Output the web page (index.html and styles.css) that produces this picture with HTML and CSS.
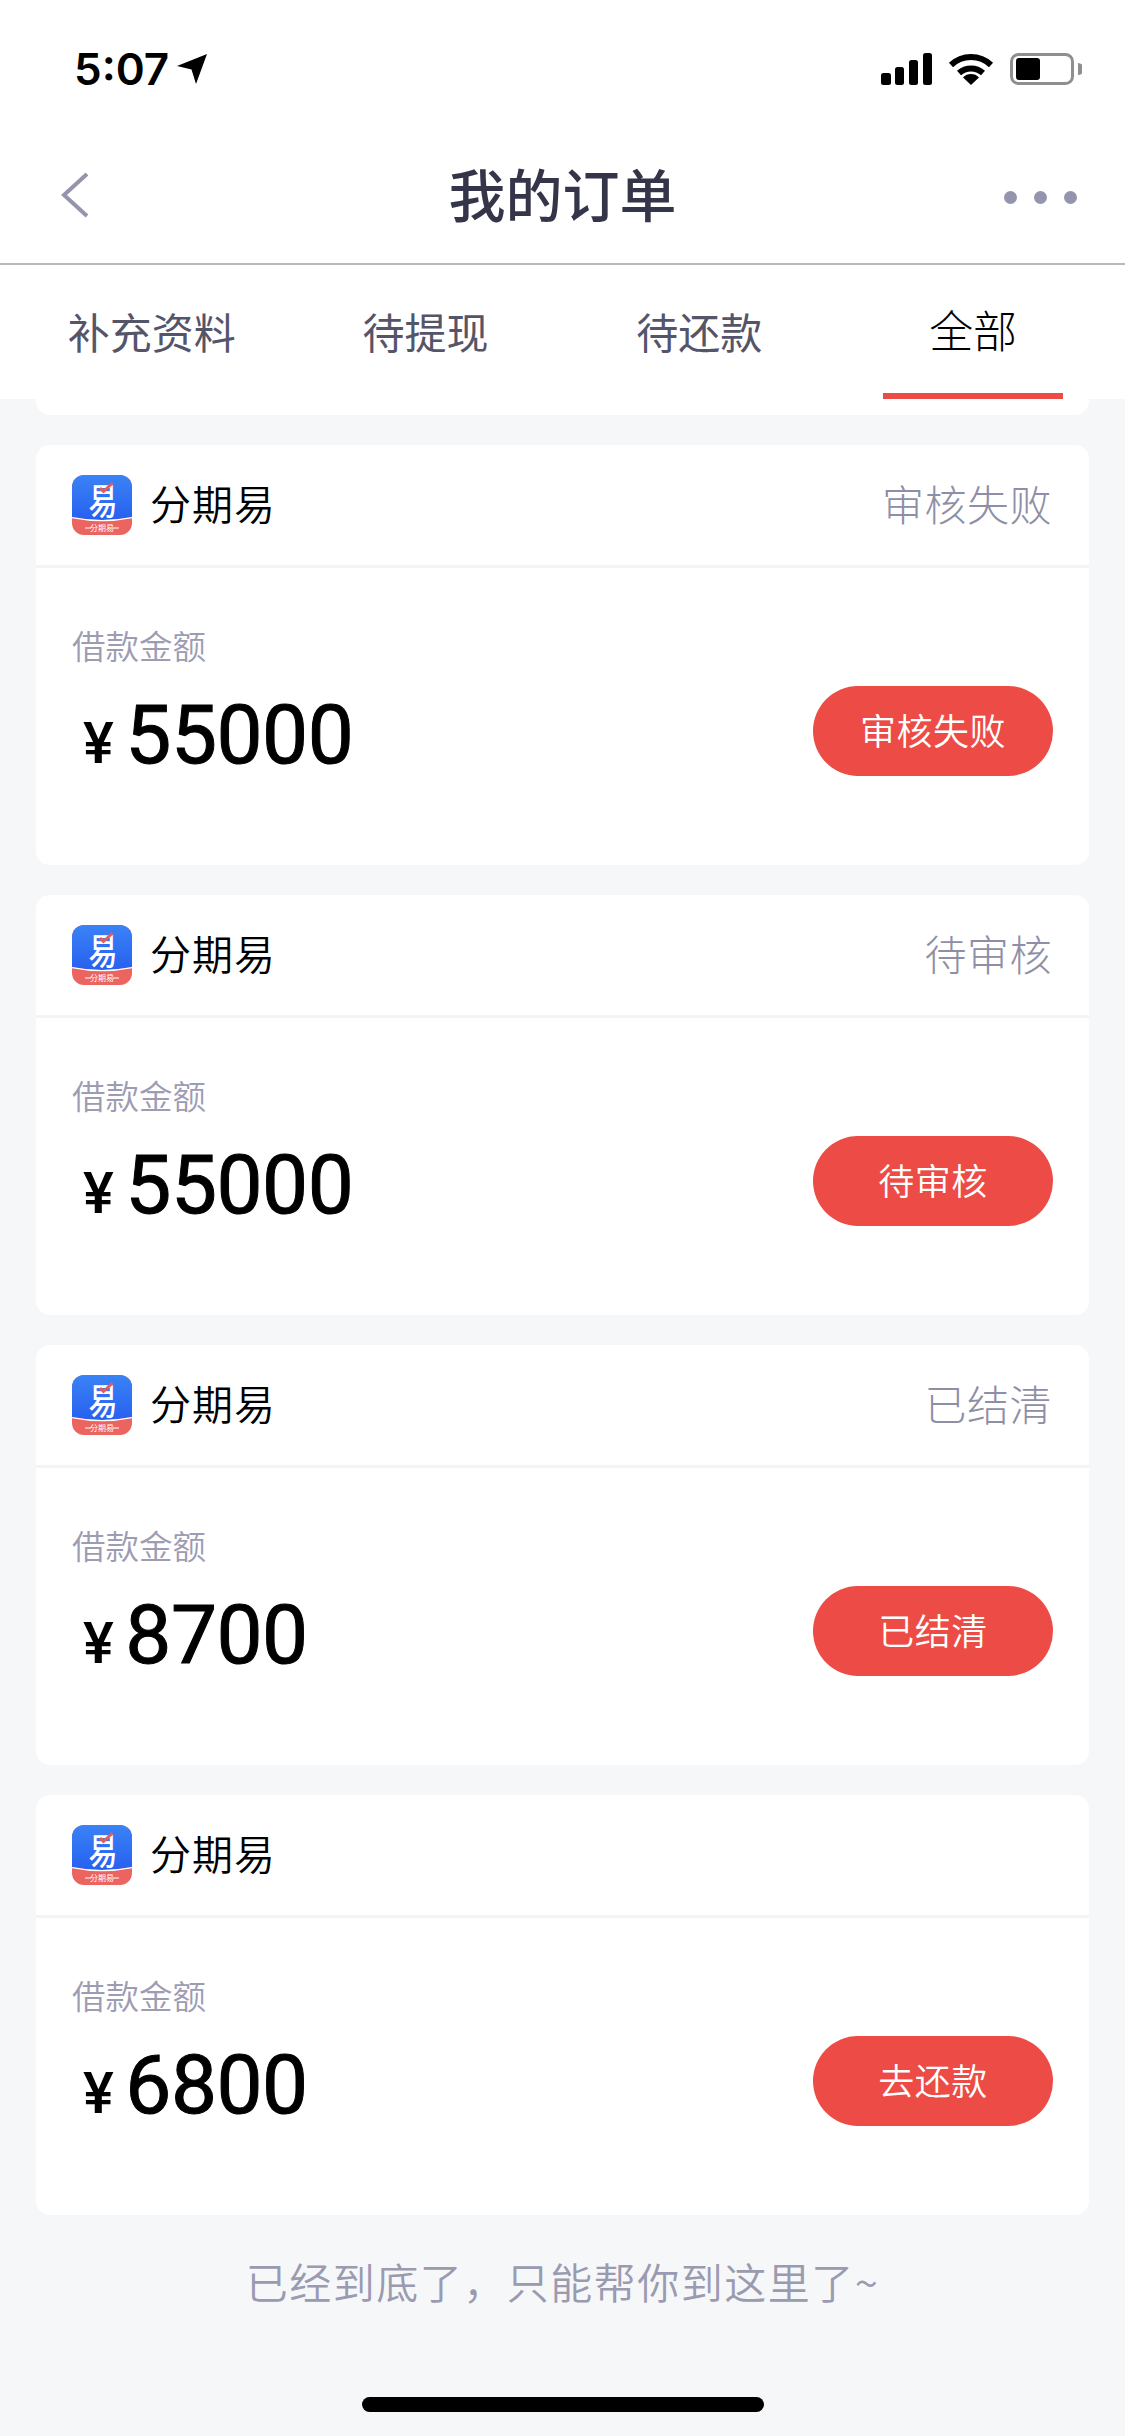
FILE: index.html
```html
<!DOCTYPE html>
<html lang="zh-CN">
    <head>
        <meta charset="UTF-8">
        <meta name="viewport" content="width=device-width, initial-scale=1.0">
        <title>我的订单</title>
        <link rel="stylesheet" href="styles.css">
    </head>
    <body>
        <svg class="defs" width="0" height="0">
            <defs>
                <linearGradient id="logoBlue" x1="0" y1="0" x2="0" y2="1">
                    <stop offset="0" stop-color="#3a83f6"/>
                    <stop offset="1" stop-color="#2760f0"/>
                </linearGradient>
                <symbol id="logo" viewBox="0 0 60 60">
                    <rect width="60" height="60" rx="12" fill="#ec6460"/>
                    <path d="M0 12a12 12 0 0 1 12-12h36a12 12 0 0 1 12 12v30q-30 6-60 0z" fill="url(#logoBlue)"/>
                    <path d="M0 42q30 6 60 0v1.200q-30 6-60 0z" fill="#fff"/>
                    <text class="logo-big" transform="translate(31 40) scale(1 1.25)">易</text>
                    <path d="M28 13l3.500 3.500 9-8.500" fill="none" stroke="#ec5a50" stroke-width="3"/>
                    <text x="30" y="56" class="logo-small">分期易</text>
                    <path d="M13 53h6M41 53h6" stroke="#fff" stroke-width="1"/>
                </symbol>
            </defs>
        </svg>

        <div class="status-bar">
            <div class="status-left">
                <span class="time">5:07</span>
                <svg class="arrow" width="30" height="30" viewBox="0 0 30 30"><path d="M30 0L19 30 14.500 15.500 0 12z" fill="#000"/></svg>
            </div>
            <div class="status-right">
                <svg width="51" height="32" viewBox="0 0 51 32">
                    <rect x="0" y="20" width="10" height="12" rx="2.500"/>
                    <rect x="14" y="14" width="9" height="18" rx="2.500"/>
                    <rect x="28" y="7" width="9" height="25" rx="2.500"/>
                    <rect x="42" y="0" width="9" height="32" rx="2.500"/>
                </svg>
                <svg width="46" height="32" viewBox="0 0 46 32">
                    <path d="M3 12A29 29 0 0 1 43 12M11 20A18 18 0 0 1 35 20" fill="none" stroke="#000" stroke-width="6"/>
                    <path d="M23 32L15 24.500A11 11 0 0 1 31 24.500z"/>
                </svg>
                <svg width="72" height="32" viewBox="0 0 72 32">
                    <rect x="1.500" y="1.500" width="61" height="29" rx="7" fill="none" stroke="#8f8f8f" stroke-width="3"/>
                    <rect x="6" y="5" width="24" height="22" rx="3"/>
                    <path d="M68 10a6 6 0 0 1 0 12z" fill="#8f8f8f"/>
                </svg>
            </div>
        </div>

        <nav class="nav-bar">
            <svg class="back" width="30" height="46" viewBox="0 0 30 46"><path d="M27 2L4 23l23 21" fill="none" stroke="#9494ac" stroke-width="4"/></svg>
            <h1 class="title">我的订单</h1>
            <div class="more"><i></i><i></i><i></i></div>
        </nav>

        <div class="tabs">
            <div class="tab">补充资料</div>
            <div class="tab">待提现</div>
            <div class="tab">待还款</div>
            <div class="tab active">全部</div>
        </div>

        <main class="list">
            <div class="card-stub"></div>

            <section class="card">
                <div class="card-head">
                    <svg class="logo"><use href="#logo"/></svg>
                    <span class="app-name">分期易</span>
                    <span class="state">审核失败</span>
                </div>
                <div class="card-body">
                    <div class="loan">
                        <div class="loan-label">借款金额</div>
                        <div class="amount"><span class="yen">¥</span>55000</div>
                    </div>
                    <a class="pill" href="#">审核失败</a>
                </div>
            </section>

            <section class="card">
                <div class="card-head">
                    <svg class="logo"><use href="#logo"/></svg>
                    <span class="app-name">分期易</span>
                    <span class="state">待审核</span>
                </div>
                <div class="card-body">
                    <div class="loan">
                        <div class="loan-label">借款金额</div>
                        <div class="amount"><span class="yen">¥</span>55000</div>
                    </div>
                    <a class="pill" href="#">待审核</a>
                </div>
            </section>

            <section class="card">
                <div class="card-head">
                    <svg class="logo"><use href="#logo"/></svg>
                    <span class="app-name">分期易</span>
                    <span class="state">已结清</span>
                </div>
                <div class="card-body">
                    <div class="loan">
                        <div class="loan-label">借款金额</div>
                        <div class="amount"><span class="yen">¥</span>8700</div>
                    </div>
                    <a class="pill" href="#">已结清</a>
                </div>
            </section>

            <section class="card">
                <div class="card-head">
                    <svg class="logo"><use href="#logo"/></svg>
                    <span class="app-name">分期易</span>
                </div>
                <div class="card-body">
                    <div class="loan">
                        <div class="loan-label">借款金额</div>
                        <div class="amount"><span class="yen">¥</span>6800</div>
                    </div>
                    <a class="pill" href="#">去还款</a>
                </div>
            </section>
        </main>

        <p class="end-note">已经到底了，只能帮你到这里了~</p>
        <div class="home-bar"></div>
    </body>
</html>
```

FILE: styles.css
```css
body {
    margin: 0;
    height: 2436px;
    overflow: hidden;
    background-color: #f6f7f9;
    font-family: "Noto Sans CJK SC", "Noto Sans", sans-serif;
}

.defs {
    display: block;
    height: 0;
}

.logo-big {
    font-size: 29px;
    font-weight: 500;
    fill: #fff;
    text-anchor: middle;
}

.logo-small {
    font-size: 8px;
    fill: #fff;
    text-anchor: middle;
}

/* status bar */
.status-bar {
    height: 132px;
    box-sizing: border-box;
    padding: 53px 43px 0 74px;
    display: flex;
    justify-content: space-between;
    align-items: flex-start;
    background-color: #fff;
}

.status-left {
    display: flex;
    align-items: center;
    gap: 8px;
    height: 32px;
}

.time {
    font-family: Inter, sans-serif;
    font-size: 44px;
    font-weight: 600;
    line-height: 32px;
    color: #000;
}

.status-right {
    display: flex;
    gap: 16px;
}

/* nav */
.nav-bar {
    height: 133px;
    box-sizing: border-box;
    border-bottom: 2px solid #b9b9b9;
    padding: 0 48px 6px;
    display: grid;
    grid-template-columns: 1fr auto 1fr;
    align-items: center;
    background-color: #fff;
}

.back {
    margin-left: 12px;
}

.title {
    margin: 0 0 6px;
    font-size: 57px;
    font-weight: 500;
    line-height: 80px;
    color: #35354a;
}

.more {
    display: flex;
    justify-content: flex-end;
    gap: 17px;
    margin-top: 6px;
}

.more i {
    width: 13px;
    height: 13px;
    border-radius: 50%;
    background-color: #9494ac;
}

/* tabs */
.tabs {
    height: 134px;
    padding: 0 15px;
    display: grid;
    grid-template-columns: repeat(4, 1fr);
    background-color: #fff;
}

.tab {
    position: relative;
    padding-top: 36px;
    text-align: center;
    font-size: 42px;
    font-weight: 400;
    line-height: 60px;
    color: #55556a;
}

.tab.active {
    padding-top: 34px;
    font-size: 44px;
    font-weight: 300;
    color: #000;
}

.tab.active::after {
    content: "";
    position: absolute;
    left: 47px;
    bottom: 0;
    width: 180px;
    height: 6px;
    background-color: #ec4c45;
}

/* order list */
.list {
    padding: 0 36px;
    display: flex;
    flex-direction: column;
    gap: 30px;
}

.card-stub {
    height: 16px;
    border-radius: 0 0 14px 14px;
    background-color: #fff;
}

.card {
    height: 420px;
    border-radius: 14px;
    background-color: #fff;
}

.card-head {
    height: 123px;
    box-sizing: border-box;
    border-bottom: 3px solid #f3f4f7;
    padding: 0 37px 0 36px;
    display: flex;
    align-items: center;
}

.logo {
    width: 60px;
    height: 60px;
    flex: none;
}

.app-name {
    margin: 0 0 6px 18px;
    font-size: 41px;
    letter-spacing: 1px;
    font-weight: 350;
    color: #000;
}

.state {
    margin: 0 0 6px auto;
    font-size: 42px;
    font-weight: 300;
    letter-spacing: 0.5px;
    color: #8e8ea6;
}

.card-body {
    padding: 0 36px;
    display: flex;
    justify-content: space-between;
    align-items: flex-start;
}

.loan {
    padding-top: 57px;
}

.loan-label {
    font-size: 33.5px;
    font-weight: 350;
    line-height: 40px;
    color: #9c9cb2;
}

.amount {
    margin-top: 27px;
    padding-left: 11px;
    display: flex;
    align-items: baseline;
    font-family: Roboto, sans-serif;
    font-size: 82px;
    font-weight: 400;
    letter-spacing: -0.5px;
    line-height: 86px;
    color: #000;
    -webkit-text-stroke: 1px #000;
}

.yen {
    margin-right: 12px;
    font-size: 58px;
    font-weight: 500;
    -webkit-text-stroke: 0;
}

.pill {
    width: 240px;
    height: 86px;
    padding-bottom: 4px;
    margin-top: 118px;
    border-radius: 45px;
    display: flex;
    align-items: center;
    justify-content: center;
    background-color: #ec4c45;
    color: #fff;
    font-size: 36px;
    font-weight: 350;
    letter-spacing: 0.5px;
    text-decoration: none;
}

.end-note {
    margin: 36px 0 0;
    text-align: center;
    font-size: 42px;
    font-weight: 350;
    letter-spacing: 1.5px;
    line-height: 60px;
    color: #9a9ab0;
}

.home-bar {
    width: 402px;
    height: 15px;
    margin: 86px auto 0;
    border-radius: 8px;
    background-color: #000;
}
```
